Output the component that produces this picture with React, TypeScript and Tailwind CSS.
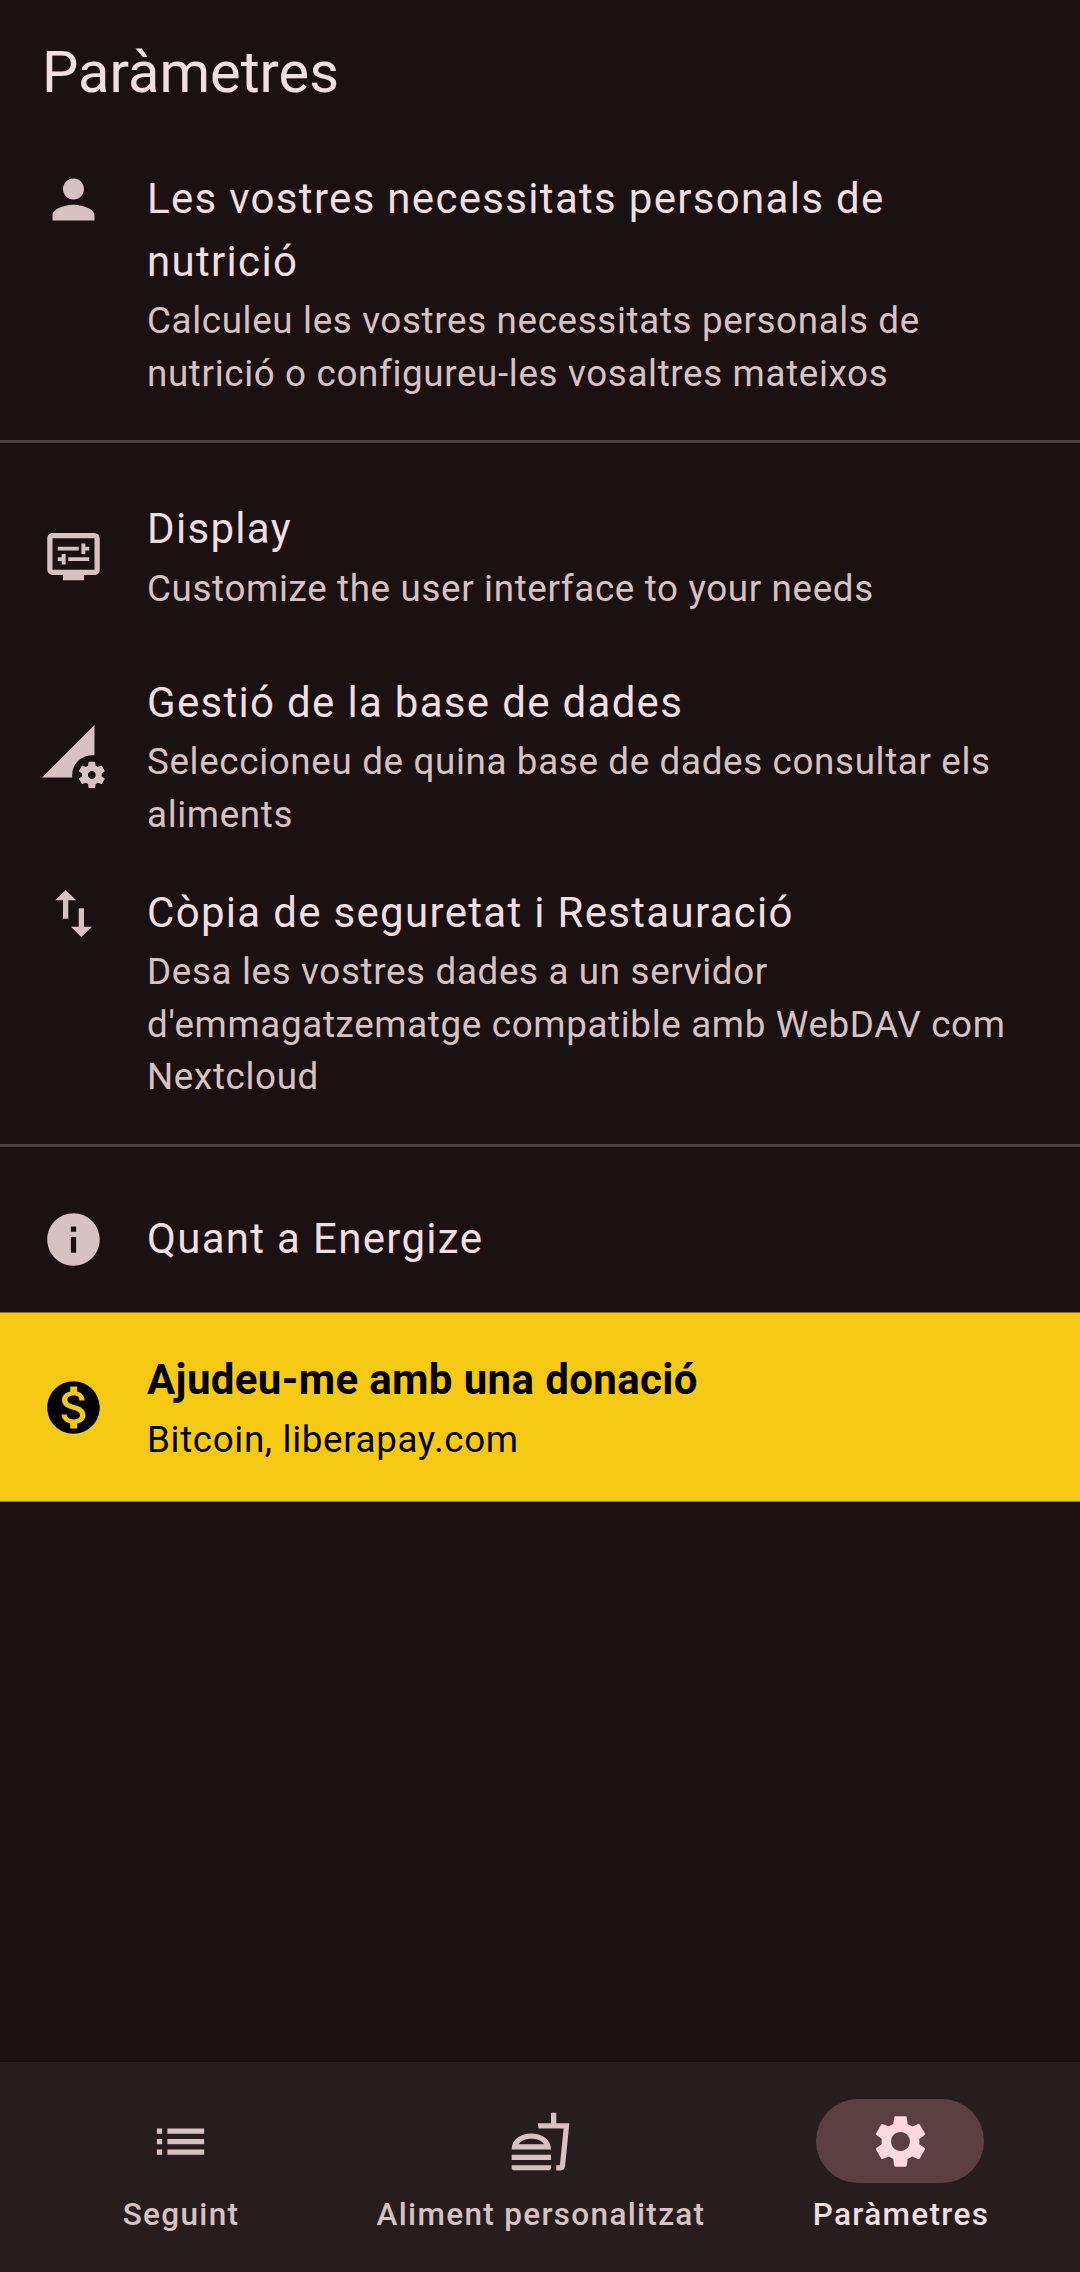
import type { ReactNode } from "react";
import type { IconType } from "react-icons";
import {
  MdImportExport,
  MdInfo,
  MdList,
  MdMonetizationOn,
  MdOutlineDisplaySettings,
  MdOutlineFastfood,
  MdPermDataSetting,
  MdPerson,
  MdSettings,
} from "react-icons/md";

type ItemProps = {
  icon: IconType;
  title: string;
  children?: ReactNode;
  row: string;
  iconClass?: string;
  titleClass?: string;
  bodyClass?: string;
};

function Item({
  icon: Icon,
  title,
  children,
  row,
  iconClass = "mt-[1px] text-[#d7c1c3]",
  titleClass = "tracking-[1.3125px] text-[#f1dee0]",
  bodyClass = "mt-[2.3px] text-[#d7c1c3]",
}: ItemProps) {
  return (
    <div className={`flex w-full shrink-0 gap-[42px] pr-[63px] pl-[42px] ${row}`}>
      <Icon className={`size-[63px] shrink-0 ${iconClass}`} />
      <div className="flex-1">
        <div className={`text-[42px] leading-[63px] ${titleClass}`}>{title}</div>
        {children && (
          <div className={`text-[36.75px] leading-[52.5px] tracking-[0.656px] ${bodyClass}`}>{children}</div>
        )}
      </div>
    </div>
  );
}

function Divider() {
  return <div className="h-[3px] w-full shrink-0 border-b border-[#44383a] bg-[#524345]" />;
}

type TabProps = { icon: IconType; label: string; active?: boolean };

function Tab({ icon: Icon, label, active = false }: TabProps) {
  return (
    <div className="flex flex-1 flex-col items-center pt-[37px]">
      <div
        className={`flex h-[84px] w-[168px] items-center justify-center rounded-full ${
          active ? "bg-[#5c3f43] text-[#ffd9dd]" : "text-[#d7c1c3]"
        }`}
      >
        <Icon className="size-[63px]" />
      </div>
      <div
        className={`mt-[10px] pl-[2px] text-[31.5px] leading-[43px] font-medium tracking-[1.3125px] whitespace-nowrap ${
          active ? "text-[#f1dee0]" : "text-[#d7c1c3]"
        }`}
      >
        {label}
      </div>
    </div>
  );
}

export default function App() {
  return (
    <div className="flex h-[2272px] w-[1080px] flex-col overflow-hidden bg-[#1b1113] font-['Roboto',sans-serif]">
      <header className="h-[136px] shrink-0 px-[42px] pt-[35px] text-[57.75px] leading-[74px] text-[#f1dee0]">
        Paràmetres
      </header>

      <main className="flex flex-1 flex-col">
        <Item icon={MdPerson} title="Les vostres necessitats personals de nutrició" row="h-[304px] pt-[31px]">
          Calculeu les vostres necessitats personals de nutrició o configureu-les vosaltres mateixos
        </Item>
        <Divider />
        <Item
          icon={MdOutlineDisplaySettings}
          title="Display"
          row="h-[196px] pt-[54px]"
          iconClass="mt-[28px] text-[#d7c1c3]"
          bodyClass="mt-[3px] text-[#d7c1c3]"
        >
          Customize the user interface to your needs
        </Item>
        <Item
          icon={MdPermDataSetting}
          title="Gestió de la base de dades"
          row="h-[210px] pt-[32px]"
          iconClass="mt-[54px] text-[#d7c1c3]"
        >
          Seleccioneu de quina base de dades consultar els aliments
        </Item>
        <Item icon={MdImportExport} title="Còpia de seguretat i Restauració" row="h-[295px] pt-[32px]">
          Desa les vostres dades a un servidor d'emmagatzematge compatible amb WebDAV com Nextcloud
        </Item>
        <Divider />
        <Item icon={MdInfo} title="Quant a Energize" row="h-[165px] pt-[60px]" />
        <Item
          icon={MdMonetizationOn}
          title="Ajudeu-me amb una donació"
          row="h-[190px] border-y border-[#8a6f16] bg-[#f6c915] pt-[35px]"
          iconClass="mt-[28px] text-black"
          titleClass="font-bold tracking-[0.37px] text-black"
          bodyClass="mt-[3px] text-black"
        >
          Bitcoin, liberapay.com
        </Item>
      </main>

      <nav className="flex h-[210px] shrink-0 bg-[#271d1f]">
        <Tab icon={MdList} label="Seguint" />
        <Tab icon={MdOutlineFastfood} label="Aliment personalitzat" />
        <Tab icon={MdSettings} label="Paràmetres" active />
      </nav>
    </div>
  );
}
